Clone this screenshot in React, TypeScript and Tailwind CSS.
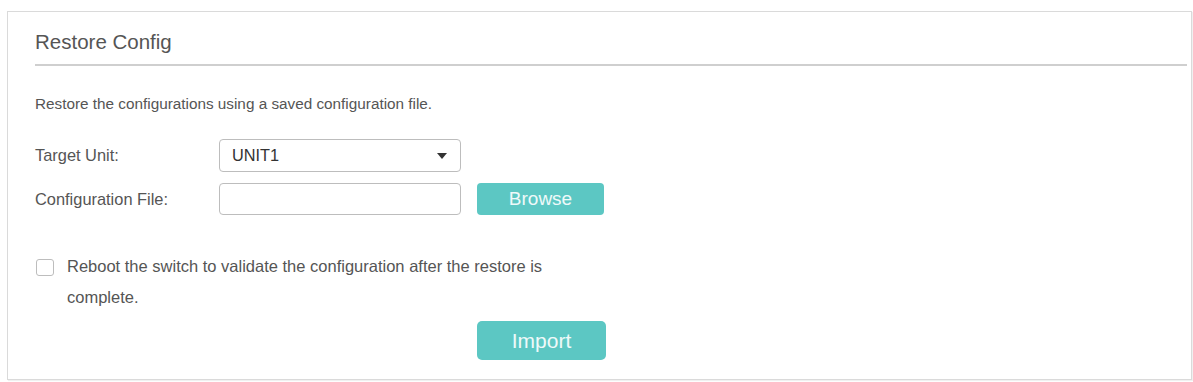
export default function App() {
  return (
    <div
      className="w-[1193px] h-[382px] bg-white pt-[11px] pl-[7px]"
      style={{ fontFamily: '"Liberation Sans", Arial, sans-serif' }}
    >
      <RestoreConfigPanel />
    </div>
  );
}

function RestoreConfigPanel() {
  return (
    <section className="w-[1185px] h-[369px] border border-[#dadada] shadow-[1px_1px_1px_rgba(0,0,0,0.06)] pl-[27px] pr-[4px] pt-[18px]">
      <h2 className="text-[20.5px] leading-[24px] text-[#555] pb-[10px] border-b-2 border-[#cfcfcf]">
        Restore Config
      </h2>

      <p className="mt-[28px] text-[15.3px] leading-[20px] text-[#555]">
        Restore the configurations using a saved configuration file.
      </p>

      <div className="mt-[25px] flex flex-col gap-[11px]">
        <FormRow label="Target Unit:">
          <div className="w-[242px] h-[33px] border border-[#bdbdbd] rounded-[4px] flex items-center justify-between pl-[12px] pr-[13px]">
            <span className="text-[16.3px] text-[#333]">UNIT1</span>
            <svg width="10" height="6" viewBox="0 0 10 6">
              <path d="M0 0 L10 0 L5 6 Z" fill="#333" />
            </svg>
          </div>
        </FormRow>
        <FormRow label="Configuration File:">
          <div className="w-[242px] h-[32px] border border-[#bdbdbd] rounded-[4px]" />
          <button className="ml-[16px] w-[127px] h-[32px] rounded-[4px] bg-[#5cc7c3] text-[19px] text-white/90">
            Browse
          </button>
        </FormRow>
      </div>

      <div className="mt-[36px] ml-[1px] flex items-start gap-[13px]">
        <span className="mt-[8px] w-[18px] h-[17px] border border-[#bdbdbd] rounded-[3px] shrink-0" />
        <p className="w-[500px] text-[16.5px] leading-[31px] text-[#555]">
          Reboot the switch to validate the configuration after the restore is
          complete.
        </p>
      </div>

      <div className="mt-[8px] pl-[442px]">
        <button className="w-[129px] h-[39px] rounded-[5px] bg-[#5cc7c3] text-[21px] text-white/90">
          Import
        </button>
      </div>
    </section>
  );
}

interface FormRowProps {
  label: string;
  children: React.ReactNode;
}

const FormRow: React.FC<FormRowProps> = ({ label, children }) => {
  return (
    <div className="flex items-center">
      <label className="w-[184px] text-[16.4px] text-[#555]">{label}</label>
      {children}
    </div>
  );
};
